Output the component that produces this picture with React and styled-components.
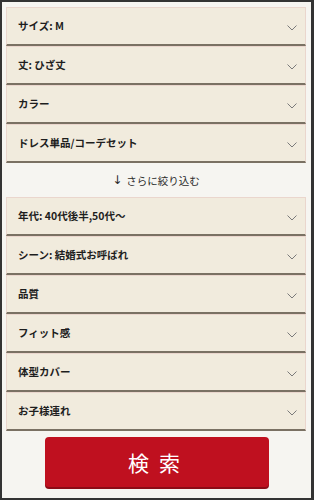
import React from "react";
import styled, { createGlobalStyle } from "styled-components";

const Global = createGlobalStyle`
  html, body { margin: 0; padding: 0; background: #f6f5f1; }
  * { box-sizing: border-box; }
`;

const Frame = styled.div`
  width: 314px;
  height: 500px;
  border: 2px solid #333;
  border-right-width: 3px;
  background: #f6f5f1;
  padding: 5px 5px 0 4px;
  font-family: "Noto Sans CJK JP", "Noto Sans", sans-serif;
  overflow: hidden;
`;

const List = styled.div`
  display: flex;
  flex-direction: column;
`;

const Row = styled.div`
  height: 39px;
  background: #f1ebdd;
  border: 1px solid #ead6cd;
  border-bottom: 2px solid #7a7163;
  display: flex;
  align-items: center;
  justify-content: space-between;
  padding: 0 8px 0 11px;
`;

const Label = styled.span`
  font-size: 10.5px;
  font-weight: 700;
  color: #1e1e1e;
  line-height: 1;
`;

const Chevron = styled.svg`
  width: 10px;
  height: 6px;
  margin-top: 4px;
  flex: none;
`;

const More = styled.div`
  height: 34px;
  display: flex;
  align-items: center;
  justify-content: center;
  font-size: 10.5px;
  color: #2a2a2a;
  gap: 4px;
`;

const Arrow = styled.span`
  font-family: "DejaVu Sans", sans-serif;
  font-size: 12px;
`;

const ButtonWrap = styled.div`
  display: flex;
  justify-content: center;
  padding-top: 6px;
`;

const SearchButton = styled.button`
  width: 224px;
  height: 50px;
  margin-left: 2px;
  border: none;
  border-radius: 4px;
  background: #bf101f;
  box-shadow: 0 2px 0 #8c0b16;
  color: #fff;
  font-family: "Noto Sans CJK JP", sans-serif;
  font-size: 21px;
  font-weight: 400;
  letter-spacing: 10px;
  padding-left: 10px;
  display: flex;
  align-items: center;
  justify-content: center;
`;

const Chev = () => (
  <Chevron viewBox="0 0 10 6">
    <path d="M0.5 0.5 L5 5 L9.5 0.5" fill="none" stroke="#7a7a7a" strokeWidth="1" />
  </Chevron>
);

const top = ["サイズ: M", "丈: ひざ丈", "カラー", "ドレス単品/コーデセット"];
const bottom = [
  "年代: 40代後半,50代〜",
  "シーン: 結婚式お呼ばれ",
  "品質",
  "フィット感",
  "体型カバー",
  "お子様連れ",
];

export default function App() {
  return (
    <>
      <Global />
      <Frame>
        <List>
          {top.map((t) => (
            <Row key={t}>
              <Label>{t}</Label>
              <Chev />
            </Row>
          ))}
        </List>
        <More>
          <Arrow>↓</Arrow>
          <span>さらに絞り込む</span>
        </More>
        <List>
          {bottom.map((t) => (
            <Row key={t}>
              <Label>{t}</Label>
              <Chev />
            </Row>
          ))}
        </List>
        <ButtonWrap>
          <SearchButton>検索</SearchButton>
        </ButtonWrap>
      </Frame>
    </>
  );
}
